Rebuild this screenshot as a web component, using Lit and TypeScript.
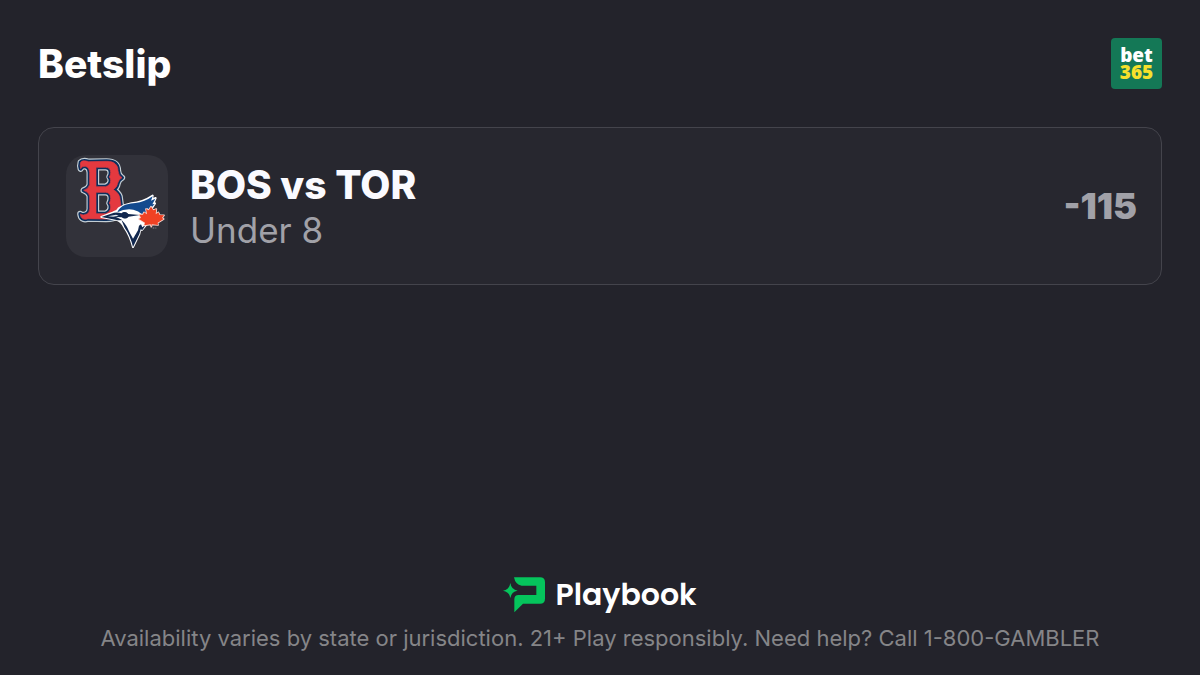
import { LitElement, html, css, svg } from "lit";
import { customElement, property } from "lit/decorators.js";

const LETTER_B =
  "M62 43 C67 37 76 38 86 41 L140 40 C162 40 174 50 174 68 Q175 83 186 89 Q175 95 173 106 Q171 118 160 125 Q174 132 179 146 L183 176 C183 203 166 213 138 213 L84 212 C69 217 62 210 61 198 Q69 204 80 198 Q89 193 89 182 L89 144 Q86 132 71 127 Q86 122 89 110 L89 74 Q88 57 76 55 Q65 54 62 62 Q59 53 62 43 Z " +
  "M108 58 L108 116 L137 116 Q152 112 152 97 Q152 91 148 87 Q152 81 152 74 Q152 58 136 58 Z " +
  "M108 133 L108 197 L137 197 Q152 192 152 177 Q152 170 148 165 Q152 159 152 151 Q152 133 136 133 Z";

const JAY =
  "M124 207 L160 193 Q172 191 176 181 Q192 170 214 166 Q247 164 278 143 L276 154 L287 150 L279 168 L285 166 L268 192 L262 226 L246 246 L241 243 L238 258 L219 297 Q210 262 193 238 Q184 220 168 215 Z";

const LEAF =
  "M273 176 L280 187 L289 183 L287 199 L295 193 L299 201 L312 202 L306 210 L311 213 L293 224 L294 231 L275 229 L274 236 L272 229 L253 232 L255 224 L237 213 L243 209 L238 200 L249 200 L252 193 L261 199 L258 183 L266 187 Z";

@customElement("team-logos")
export class TeamLogos extends LitElement {
  static styles = css`
    :host {
      display: block;
      flex: none;
      width: 102px;
      height: 102px;
      border-radius: 20px;
      background: #32323a;
      overflow: hidden;
    }
    svg {
      display: block;
      width: 100%;
      height: 100%;
    }
  `;

  render() {
    return html`
      <svg viewBox="18 21 306 306" role="img" aria-label="Boston and Toronto">
        ${svg`
          <g fill-rule="evenodd" stroke-linejoin="round">
            <path d=${LETTER_B} fill="#c4ced4" stroke="#c4ced4" stroke-width="19" />
            <path d=${LETTER_B} fill="#0c2f5c" stroke="#0c2f5c" stroke-width="12" />
            <path d=${LETTER_B} fill="#e4393f" stroke="#e4393f" stroke-width="2" />
          </g>
          <path d=${JAY} fill="#fff" stroke="#fff" stroke-width="6" stroke-linejoin="round" />
          <path fill="#134a8e" d="M172 193 Q176 179 196 170 Q214 165 226 165 Q254 162 278 145 L273 158 L286 152 L277 169 L284 168 L268 186 L262 180 L259 198 L246 199 Q236 188 220 185 Q194 181 172 193 Z" />
          <path fill="#12284f" d="M124 207 L162 194 Q174 192 184 196 Q194 187 205 198 L240 201 L206 206 Q196 216 185 208 L168 207 L186 215 Q178 218 166 215 Z" />
          <path fill="#dfe5ec" d="M144 205 L168 200 L176 203 L160 206 Z" />
          <path fill="#12284f" d="M184 215 Q201 232 207 250 L219 272 L234 247 L237 233 L243 229 L247 238 L259 229 L247 246 L242 244 L238 258 L219 297 Q211 262 194 239 Z" />
          <circle cx="195" cy="202" r="9" fill="#12284f" />
          <path d=${LEAF} fill="#fbd9d2" stroke="#fbd9d2" stroke-width="5" stroke-linejoin="round" />
          <path d=${LEAF} fill="#f04123" />
          <path d="M278 240h5m3 0h3" stroke="#8e8e94" stroke-width="3" />
        `}
      </svg>
    `;
  }
}

@customElement("bet-row")
export class BetRow extends LitElement {
  @property() matchup = "";
  @property() pick = "";
  @property() odds = "";

  static styles = css`
    :host {
      display: flex;
      align-items: center;
      gap: 22px;
      padding: 27px 24px 27px 27px;
      border: 1px solid #44444c;
      border-radius: 16px;
      background: #27272f;
    }
    .details {
      flex: 1;
      min-width: 0;
    }
    .matchup {
      margin: 0;
      font-size: 39px;
      line-height: 48px;
      font-weight: 800;
      color: #fafaff;
    }
    .pick {
      margin: 0;
      font-size: 35px;
      line-height: 43px;
      color: #a1a1a8;
    }
    .odds {
      font-size: 36px;
      line-height: 43px;
      font-weight: 900;
      color: #a1a1a8;
    }
  `;

  render() {
    return html`
      <team-logos></team-logos>
      <div class="details">
        <h2 class="matchup">${this.matchup}</h2>
        <p class="pick">${this.pick}</p>
      </div>
      <span class="odds">${this.odds}</span>
    `;
  }
}

@customElement("app-root")
export class AppRoot extends LitElement {
  static styles = css`
    :host {
      display: flex;
      flex-direction: column;
      box-sizing: border-box;
      min-height: 100vh;
      padding: 38px 38px 23px;
      background: #23232b;
      color: #fff;
      font-family: Inter, sans-serif;
    }
    header {
      display: flex;
      align-items: center;
      justify-content: space-between;
      margin-bottom: 38px;
    }
    h1 {
      margin: 0;
      font-size: 39px;
      line-height: 48px;
      font-weight: 800;
    }
    .book {
      display: grid;
      place-content: center;
      justify-items: center;
      width: 51px;
      height: 51px;
      border-radius: 4px;
      background: #147856;
      font-family: "Noto Sans", sans-serif;
      font-size: 19px;
      line-height: 17px;
      font-weight: 900;
    }
    .book-number {
      color: #f6e02c;
    }
    footer {
      display: flex;
      flex-direction: column;
      align-items: center;
      gap: 10px;
      margin-top: auto;
    }
    .brand {
      display: flex;
      align-items: center;
      gap: 10px;
      font-family: Poppins, Lato, sans-serif;
      font-size: 30px;
      line-height: 38px;
      font-weight: 600;
    }
    .brand svg {
      width: 42px;
      height: 36px;
    }
    .legal {
      margin: 0;
      font-size: 22px;
      line-height: 28px;
      text-align: center;
      color: #858588;
    }
  `;

  render() {
    return html`
      <header>
        <h1>Betslip</h1>
        <div class="book">
          <span>bet</span>
          <span class="book-number">365</span>
        </div>
      </header>
      <main>
        <bet-row matchup="BOS vs TOR" pick="Under 8" odds="-115"></bet-row>
      </main>
      <footer>
        <div class="brand">
          <svg viewBox="27 29 126 108" fill="#05c45c" aria-hidden="true">
            <path d="M60 30 H138 Q153 30 153 45 V94 Q153 109 138 109 H87 L61 135 V96 Q61 83 74 83 H127 V55 H83 Q64 52 60 30 Z" />
            <path d="M49 47 Q52 67 71 70 Q52 73 49 92 Q46 73 27 70 Q46 67 49 47 Z" />
          </svg>
          <span>Playbook</span>
        </div>
        <p class="legal">
          Availability varies by state or jurisdiction. 21+ Play responsibly. Need help? Call 1-800-GAMBLER
        </p>
      </footer>
    `;
  }
}
